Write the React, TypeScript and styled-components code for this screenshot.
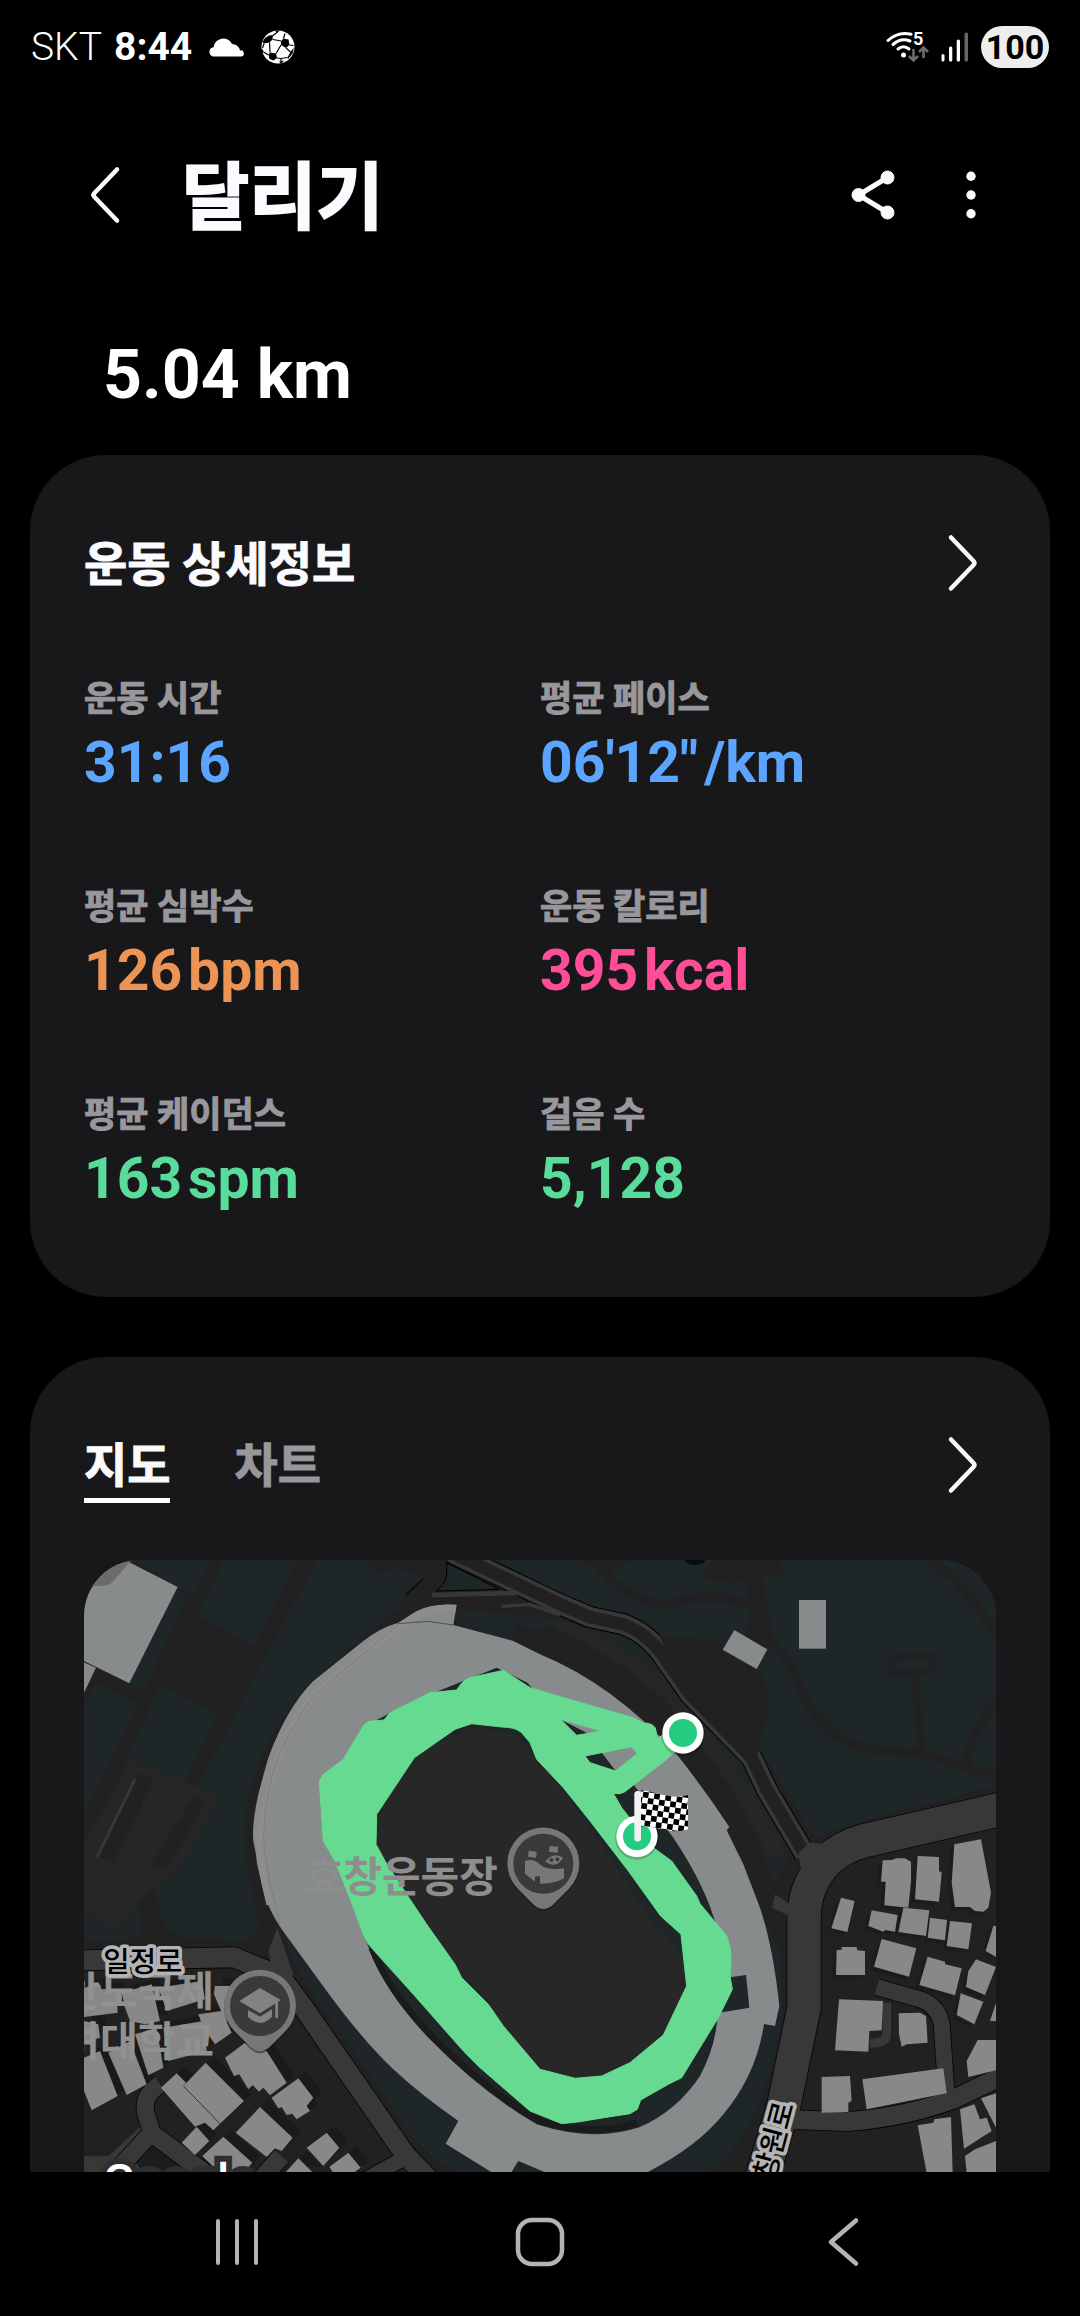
import React from "react";
import styled, { createGlobalStyle } from "styled-components";

const GlobalStyle = createGlobalStyle`
  * { box-sizing: border-box; }
  body { margin: 0; background: #000; }
`;

const Screen = styled.div`
  height: 100vh;
  display: flex;
  flex-direction: column;
  background: #000;
  color: #fafaff;
  font-family: Roboto, "Noto Sans CJK KR", sans-serif;
`;

const StatusBar = styled.div`
  flex: none;
  height: 94px;
  padding: 0 31px;
  display: flex;
  align-items: center;
  justify-content: space-between;
  color: #fff;
`;

const StatusGroup = styled.div<{ $gap: number }>`
  display: flex;
  align-items: center;
  gap: ${(p) => p.$gap}px;
  svg { display: block; }
`;

const Carrier = styled.span`
  font-size: 39px;
  font-weight: 300;
`;

const Clock = styled.span`
  font-size: 39px;
  font-weight: 700;
  line-height: 42px;
`;

const Battery = styled.span`
  height: 42px;
  width: 68px;
  border-radius: 21px;
  background: #ededed;
  color: #000;
  font-size: 34px;
  line-height: 42px;
  font-weight: 700;
  text-align: center;
`;

const Header = styled.header`
  flex: none;
  height: 202px;
  padding: 0 81px 0 76px;
  display: flex;
  align-items: center;
  gap: 42px;
`;

const Title = styled.h1`
  margin: 0;
  padding: 5px 0 0 8px;
  flex: 1;
  font-size: 73px;
  line-height: 96px;
  font-weight: 700;
  -webkit-text-stroke: 2px currentColor;
`;

const IconButton = styled.button`
  flex: none;
  border: 0;
  padding: 0;
  background: none;
  color: inherit;
  display: flex;
  align-items: center;
  justify-content: center;
  cursor: pointer;
`;

const Content = styled.main`
  flex: 1;
  min-height: 0;
  overflow: hidden;
  padding: 0 30px;
  display: flex;
  flex-direction: column;
`;

const Distance = styled.p`
  flex: none;
  margin: 0;
  padding-left: 73px;
  font-size: 68px;
  line-height: 159px;
  font-weight: 700;
  color: #fff;
`;

const Card = styled.section`
  flex: none;
  padding: 54px 54px 83px;
  border-radius: 76px;
  background: #18181a;
  & + & { margin-top: 60px; }
`;

const CardHead = styled.div`
  height: 108px;
  display: flex;
  align-items: center;
  justify-content: space-between;
`;

const CardTitle = styled.h2`
  margin: 0;
  padding-top: 3px;
  font-size: 47px;
  line-height: 64px;
  font-weight: 700;
  -webkit-text-stroke: 1px currentColor;
`;

const Stats = styled.dl`
  margin: 55px 0 0;
  display: grid;
  grid-template-columns: 1fr 1fr;
  row-gap: 82px;
`;

const StatLabel = styled.dt`
  font-size: 35px;
  line-height: 56px;
  font-weight: 700;
  color: #98979c;
  -webkit-text-stroke: 1px currentColor;
`;

const StatValue = styled.dd<{ $color: string }>`
  margin: 0;
  display: flex;
  gap: 6px;
  font-size: 57px;
  line-height: 70px;
  font-weight: 700;
  color: ${(p) => p.$color};
`;

const Tabs = styled.div`
  display: flex;
  gap: 64px;
`;

const Tab = styled.button<{ $active?: boolean }>`
  border: 0;
  border-bottom: 5px solid ${(p) => (p.$active ? "#fff" : "transparent")};
  padding: 7px 0 0;
  background: none;
  font-family: inherit;
  font-size: 47px;
  line-height: 64px;
  font-weight: 700;
  color: ${(p) => (p.$active ? "#fafafa" : "#98979c")};
  -webkit-text-stroke: 1px currentColor;
  cursor: pointer;
`;

const MapFrame = styled.div`
  margin-top: 41px;
  border-radius: 56px;
  overflow: hidden;
  svg { display: block; width: 100%; height: auto; }
`;

const NavBar = styled.nav`
  flex: none;
  height: 144px;
  padding: 0 86px 4px;
  display: grid;
  grid-template-columns: repeat(3, 1fr);
  color: #b4b4b4;
`;

const stats = [
  { label: "운동 시간", value: "31:16", unit: "", color: "#5ba5ff" },
  { label: "평균 페이스", value: "06'12\"", unit: "/km", color: "#5ba5ff" },
  { label: "평균 심박수", value: "126", unit: "bpm", color: "#eb9456" },
  { label: "운동 칼로리", value: "395", unit: "kcal", color: "#ff4e97" },
  { label: "평균 케이던스", value: "163", unit: "spm", color: "#59dc9b" },
  { label: "걸음 수", value: "5,128", unit: "", color: "#59dc9b" },
];

const Chevron = () => (
  <svg width="56" height="60" viewBox="0 0 56 60" fill="none" stroke="#fafafa" strokeWidth="4.500" strokeLinecap="round" strokeLinejoin="round" aria-hidden="true">
    <path d="M11 4.500 L33.500 28 Q35.500 30 33.500 32 L11 55.500" />
  </svg>
);

const CloudIcon = () => (
  <svg width="37" height="22" viewBox="0 0 37 22" fill="#fff" aria-hidden="true">
    <path d="M5 20.500 A4.800 4.800 0 0 1 5 11.200 H5.600 A9.700 9.700 0 0 1 24 8 A8 8 0 0 1 32 14.500 A3 3 0 0 1 33.500 20.500 Z" />
  </svg>
);

const BallIcon = () => (
  <svg width="34" height="34" viewBox="0 0 34 34" aria-hidden="true">
    <circle cx="17" cy="17" r="16.500" fill="#fff" />
    <g fill="#000">
      <path d="M8 5.500 L12 5 L11.500 9.500 L8.500 12.500 L3 13.500 L1.500 12 L4 8 Z" />
      <path d="M13 0.500 L19 0.500 L16.500 2.500 Z" />
      <path d="M22.500 8.500 L27.500 9.500 L28.500 15 L25 18 L20 15 L20 11 Z" />
      <path d="M9 22.500 L15 23.500 L16 28 L12.500 30.500 L8.500 29 L7.500 25 Z" />
      <path d="M29.500 22 L33 17.500 L31.500 23.500 L27 29 L26.500 27.500 Z" />
      <path d="M0.500 18 L2.500 21 L2 24 L0.500 21 Z" />
      <path d="M18 31.500 L23 30.500 L20 33.800 Z" />
    </g>
    <g stroke="#000" strokeWidth="1.200" fill="none">
      <path d="M12 5.500 L16.500 2 M12 9.500 L20 11 M8.500 12.500 L9 22.500 M3 13.500 L1.500 18 M22.500 8.500 L24 3.500 M28.500 15 L32.500 15.500 M20 15 L15 23.500 M25 18 L29.500 22 M16 28 L20 28.500 L26.500 27.500 M7.500 25 L2.500 22 M20 28.500 V31" />
    </g>
  </svg>
);

const WifiIcon = () => (
  <svg width="43" height="32" viewBox="0 0 43 32" aria-label="Wi-Fi 5">
    <g fill="none" stroke="#fff" strokeWidth="3" strokeLinecap="round">
      <path d="M2 9.500 Q12 0 25 3.200" />
      <path d="M7 13.500 Q15 6.500 24 10" />
      <path d="M12 18 Q17.500 13.500 23 18" />
    </g>
    <circle cx="17.500" cy="24" r="2.500" fill="#fff" />
    <text x="27" y="13.500" fontSize="18" fontWeight="700" fill="#fff">5</text>
    <g fill="none" stroke="#6c6c6c" strokeWidth="2.600">
      <path d="M27.500 18 V29 M23 25 L27.500 29.500 L32 25" />
      <path d="M37.500 27 V17 M33 21 L37.500 16.500 L42 21" />
    </g>
  </svg>
);

const SignalIcon = () => (
  <svg width="28" height="30" viewBox="0 0 28 30" aria-label="신호">
    <g fill="#fff">
      <rect x="0.500" y="22" width="3" height="7.500" rx="1.500" />
      <rect x="8" y="14.500" width="3.300" height="15" rx="1.500" />
      <rect x="15.700" y="7.500" width="3.300" height="22" rx="1.500" />
    </g>
    <rect x="23.500" y="0.500" width="3.500" height="29" rx="1.500" fill="#666" />
  </svg>
);

const westBlocks = [
  "12,380 60,370 65,385 110,385 113,455 12,468",
  "125,395 215,370 240,480 195,490 150,480 135,440",
  "235,380 365,360 375,415 260,450",
  "355,460 425,450 455,515 405,550 370,500",
  "405,375 450,375 440,490 402,400",
  "12,480 55,490 60,530 12,545",
  "12,590 60,570 113,705 35,748 12,690",
  "85,575 150,540 200,670 140,702",
  "165,520 230,500 250,620 205,643",
  "250,500 370,480 380,570 265,600",
  "435,590 495,545 560,570 620,665 570,703 550,680 537,692 518,672 505,685 478,640 462,645",
  "575,710 655,652 700,710 680,735 690,750 650,775 637,758 620,762 605,738 595,742",
  "467,815 540,738 638,830 605,870 585,862 560,888",
  "310,675 377,605 492,720 420,788",
  "243,680 290,637 318,665 310,675 420,788 400,808 375,785 345,797",
  "305,845 350,797 388,840 345,882",
  "367,885 430,827 517,905 490,936 420,936",
  "680,860 740,815 778,860 730,915",
  "748,918 805,875 842,920 820,936 760,936",
  "615,936 655,892 700,936",
];

const eastBlocks = [
  "903,110 944,120 922,213 874,202",
  "1028,-2 1055,-3 1070,-8 1095,-8 1113,2 1113,60 1105,140 1033,133 1037,62 1023,62",
  "1133,-15 1197,-12 1197,30 1205,35 1197,122 1125,115",
  "1243,-50 1323,-65 1353,95 1345,140 1330,152 1305,150 1290,138 1245,138 1235,65",
  "995,148 1073,162 1065,212 1035,207 1030,212 985,195",
  "1090,140 1168,148 1158,225 1075,213",
  "1170,170 1221,177 1215,238 1163,230",
  "1230,180 1296,187 1285,265 1220,255",
  "1360,195 1368,195 1368,288 1337,270",
  "890,268 905,266 905,258 950,258 952,268 975,270 975,342 888,342",
  "1025,234 1129,262 1107,347 1002,317",
  "1163,287 1215,302 1215,310 1265,322 1245,403 1138,372",
  "1308,295 1368,318 1335,402 1278,378 1285,330",
  "1262,397 1330,422 1303,490 1250,462",
  "1368,425 1350,480 1368,480",
  "897,415 1029,420 1025,508 988,510 985,572 885,568",
  "1076,457 1140,455 1158,465 1163,545 1100,550 1085,557 1077,520",
  "1313,537 1368,537 1368,628 1285,648 1280,600",
  "845,648 930,645 935,720 925,725 925,753 845,755",
  "967,655 1210,622 1220,697 980,745",
  "1133,793 1180,785 1183,775 1233,768 1238,936 1160,936",
  "1260,745 1303,730 1320,775 1340,770 1355,810 1272,863",
  "1323,712 1368,697 1368,800",
  "1275,885 1305,865 1368,840 1368,936 1280,936",
];

const roads: { d: string; w: number }[] = [
  { d: "M0 1228 L462 1219 L600 1275 L672 1372 L975 1810 L1080 1920", w: 60 },
  { d: "M240 1600 Q175 1640 205 1710 L215 1745 L90 1880", w: 52 },
  { d: "M200 1735 L420 1900", w: 54 },
  { d: "M520 1910 L605 1815", w: 54 },
  { d: "M830 1900 L985 1815", w: 44 },
  { d: "M2120 1705 L2300 1712 Q2470 1700 2620 1645 L2760 1578", w: 56 },
  { d: "M2390 1308 L2520 1345 Q2575 1365 2585 1420 L2600 1640", w: 48 },
  { d: "M2770 773 L2350 870 Q2225 905 2185 1020 Q2172 1060 2172 1110 L2172 1370 L2112 1660 L2040 1900", w: 100 },
];

const PARK = "#1e2627";
const GROUND = "#212121";
const ROAD = "#383838";
const BLOCK = "#888888";
const STAND = "#878b8b";

const Pin = ({ x, y, children }: { x: number; y: number; children: React.ReactNode }) => (
  <g transform={`translate(${x} ${y})`}>
    <path d="M-76 76 A108 108 0 1 1 76 76 L28 124 Q0 148 -28 124 Z" fill="#141414" opacity="0.500" transform="translate(0 6)" />
    <path d="M-76 76 A108 108 0 1 1 76 76 L28 124 Q0 148 -28 124 Z" fill="#777" />
    <circle r="90" fill="#3a3a3a" />
    {children}
  </g>
);

const RouteMap = () => (
  <svg viewBox="12 27 2736 2400" role="img" aria-label="달리기 경로 지도">
    <defs>
      <pattern id="checker" width="34" height="34" patternUnits="userSpaceOnUse" patternTransform="translate(1690 722) rotate(8)">
        <rect width="34" height="34" fill="#fff" />
        <rect width="17" height="17" fill="#000" />
        <rect x="17" y="17" width="17" height="17" fill="#000" />
      </pattern>
    </defs>
    <rect x="0" y="0" width="2800" height="2500" fill={GROUND} />

    {/* parkland */}
    <g fill={PARK}>
      <polygon points="150,27 395,27 340,140 293,108" />
      <polygon points="430,27 650,27 525,285 350,195" />
      <polygon points="293,112 322,132 190,425 150,395" />
      <path d="M710 27 H850 L905 70 L940 45 L1030 78 L975 130 L960 170 L700 385 Q600 490 530 650 Q480 800 495 900 L535 1120 Q535 1170 480 1170 L300 1160 Q228 1120 228 1010 Q235 930 300 900 L410 740 L350 710 Z" />
      <polygon points="45,395 175,458 12,790 12,460" />
      <polygon points="240,405 418,490 300,720 130,635" />
      <path d="M12 1080 L110 1140 L175 1050 L187 1130 Q180 1170 100 1170 H12 Z" />
      <path d="M1200 27 H2748 V705 L2350 810 L2205 860 L2035 590 L1740 255 L1680 205 L1530 170 L1380 115 Z" />
      <path d="M1125 175 L1380 195 L1510 230 Q1630 250 1700 290 L1800 440 L2000 630 L2140 890 L2085 1000 L2060 940 Q2000 720 1800 520 Q1600 320 1420 220 L1300 270 L1130 220 Z" />
      <path d="M600 1110 L640 1240 L1000 1760 Q1060 1830 1140 1866 H1880 Q2010 1780 2070 1560 L2110 1400 L2100 1200 L1950 900 L1500 400 L700 700 Z" />
    </g>
    <ellipse cx="1845" cy="27" rx="30" ry="15" fill="#060c16" />

    {/* car parks and terraces */}
    <g fill="#262626">
      <path d="M150 630 L400 725 Q415 740 405 760 L290 960 L175 1050 L110 1140 L12 1080 V880 Z" />
      <path d="M1440 205 Q1700 290 1900 560 Q2020 720 2110 890 Q2110 920 2070 925 Q1930 640 1760 450 Q1600 300 1420 230 Z" />
    </g>
    <polygon points="180,665 222,685 100,935 60,920" fill={GROUND} />
    <polygon points="340,735 375,755 260,960 215,940" fill={GROUND} />
    <path d="M165 685 L50 920" stroke={ROAD} strokeWidth="8" />
    <path d="M1300 250 Q1620 320 1790 540 Q1930 720 2000 930" stroke={GROUND} strokeWidth="60" fill="none" />

    {/* park footpaths */}
    <g fill="none" stroke={GROUND} strokeWidth="26">
      <path d="M1540 27 Q1640 160 1770 158 Q1900 115 2010 165" />
      <path d="M2070 270 Q2130 320 2160 410 Q2230 570 2370 595 L2540 610 L2680 658 L2760 672" />
      <path d="M2660 640 Q2660 560 2760 440" />
      <path d="M2540 15 Q2640 90 2700 180 L2760 260" />
      <path d="M2430 322 L2553 310 L2558 358 L2436 370 Z" strokeWidth="18" />
      <path d="M2503 370 L2525 600" strokeWidth="20" />
    </g>
    <g fill={GROUND}>
      <path d="M1490 27 H1660 L1590 62 L1540 50 Z" />
      <path d="M1870 60 L1900 27 H2103 L2108 70 L1960 95 L1880 88 Z" />
      <path d="M1995 85 L2050 85 L2078 270 L2050 320 L1995 250 L2010 200 Z" />
      <path d="M850 27 H1100 V70 L1070 125 L1130 160 L1000 190 L960 170 L1030 78 L940 45 L905 70 Z" />
    </g>

    {/* upper lane */}
    <g fill="none" strokeLinejoin="round">
      <path d="M1115 5 L1440 160 L1530 198 L1630 220 Q1710 250 1760 330 L1830 430 L2015 620 L2060 715 L2175 910" stroke="#000" strokeWidth="66" />
      <path d="M1115 5 L1440 160 L1530 198 L1630 220 Q1710 250 1760 330 L1830 430 L2015 620 L2060 715 L2175 910" stroke={ROAD} strokeWidth="60" />
      <path d="M1115 5 L1440 160 L1530 198 L1630 220 Q1710 250 1760 330 L1830 430 L2015 620 L2060 715 L2175 910" stroke={GROUND} strokeWidth="38" />
      <path d="M1100 35 V75 Q1095 100 1068 120 L1258 115 Z" fill={PARK} stroke="#000" strokeWidth="3" />
      <path d="M1055 132 L1312 126" stroke={ROAD} strokeWidth="14" />
      <path d="M1265 166 L1350 160 L1440 192" stroke={ROAD} strokeWidth="10" />
      <path d="M978 132 L1030 82" stroke="#0b0b0b" strokeWidth="4" />
    </g>
    <path d="M1740 256 L1880 265 Q2010 300 2045 370 Q2080 460 2045 560 L2030 620 L2000 605 L1840 440 L1770 330 Z" fill={GROUND} />
    <g fill={STAND}>
      <rect x="2157" y="147" width="81" height="146" />
      <polygon points="1963,237 2062,295 2030,354 1928,296" />
    </g>

    {/* streets */}
    <polygon points="12,1816 85,1816 180,1728 400,1866 12,1866" fill={ROAD} />
    <polygon points="150,1810 215,1768 345,1866 190,1866" fill="#1c1c1c" />
    {roads.map((r) => (
      <path key={`e${r.d}`} d={r.d} stroke="#050505" strokeWidth={r.w + 5} fill="none" />
    ))}
    {roads.map((r) => (
      <path key={r.d} d={r.d} stroke={ROAD} strokeWidth={r.w} fill="none" />
    ))}
    <path d="M2420 1355 V1450 Q2420 1478 2370 1476" stroke={ROAD} strokeWidth="26" fill="none" />
    <polygon points="2155,905 2190,875 2250,880 2200,960 2165,970" fill={ROAD} />
    <polygon points="2085,1030 2130,1060 2130,1095 2076,1070" fill={ROAD} />
    <polygon points="565,1200 592,1130 640,1270 620,1300 572,1232" fill={ROAD} />

    {/* buildings */}
    <g fill="#888b8b">
      <polygon points="12,27 135,27 293,108 148,397 12,330" />
      <polygon points="12,334 48,350 12,425" />
    </g>
    <path d="M20 27 H155 L95 95 Q80 108 40 104 L12 100 Z" fill="#6b6b6b" />
    <g transform="translate(0 930)">
      <g fill="#1a1a1a" transform="translate(24 -20)">
        {westBlocks.map((p) => <polygon key={p} points={p} />)}
      </g>
      <g fill={BLOCK}>
        {westBlocks.map((p) => <polygon key={p} points={p} />)}
      </g>
      <path d="M310 675 L420 788" stroke="#222" strokeWidth="2" />
    </g>
    <g transform="translate(1380 930)">
      <g fill="#1c1c1c" transform="translate(-12 10)">
        {eastBlocks.slice(0, 14).map((p) => <polygon key={p} points={p} />)}
      </g>
      <g fill={BLOCK}>
        {eastBlocks.map((p) => <polygon key={p} points={p} />)}
      </g>
    </g>

    {/* stadium */}
    <path
      d="M1130 162 Q1060 155 1010 180 L955 215 Q900 230 850 270 L700 390 Q620 470 565 620 Q545 690 535 730 Q515 820 520 870 L545 1000 Q560 1070 605 1135 L740 1320 Q850 1470 940 1555 Q1020 1630 1135 1710 L1097 1778 L1245 1870 H1290 L1315 1830 L1410 1870 H1690 Q1850 1790 1930 1690 Q2030 1570 2052 1419 L2085 1425 L2098 1365 Q2080 1190 2040 1070 L1990 940 L1940 838 L1948 828 Q1870 710 1790 610 Q1600 400 1380 310 L1300 270 L1120 222 Z"
      fill={STAND}
    />
    <g fill="none">
      <path d="M1128 172 Q1050 168 1000 200 L870 290 L710 425 Q630 510 590 640 Q560 740 541 830 V930 L570 1060" stroke="#8e8c8c" strokeWidth="22" />
      <path d="M955 220 L700 435 Q610 560 580 660 Q545 800 552 890 L568 990 L600 1120" stroke="#777" strokeWidth="2" />
      <path d="M955 218 L1045 211 L1120 222" stroke="#333" strokeWidth="2" />
    </g>
    <path
      d="M1250 350 L1342 395 L1440 505 L1520 545 L1607 660 L1660 700 L1780 860 Q1880 1010 1910 1130 L1940 1280 L1998 1272 L2008 1370 L1913 1386 Q1910 1480 1860 1575 Q1790 1680 1680 1728 Q1540 1775 1370 1720 Q1200 1620 1050 1465 Q920 1330 862 1180 L780 960 L750 700 L820 580 L890 507 L1000 450 Z"
      fill={PARK}
    />
    <path d="M875 1190 Q930 1330 1070 1470 Q1220 1620 1380 1710 Q1540 1760 1670 1715" stroke="#1b1b1b" strokeWidth="20" fill="none" />
    <path d="M1175 530 L1290 545 Q1370 600 1430 690 L1530 830 L1720 1120 Q1820 1200 1825 1305 L1750 1470 L1650 1550 L1480 1600 L1380 1570 L1100 1250 L880 900 L880 780 L1010 610 Z" fill="#272727" />

    {/* recorded route */}
    <path
      fillRule="evenodd"
      fill="#66da91"
      stroke="#66da91"
      strokeWidth="3"
      strokeLinejoin="round"
      d="M718 690 L730 670 L790 625 L850 525 Q860 510 878 510 L912 507 L930 485 L1050 425 L1130 417 Q1150 385 1170 380 L1270 358 L1350 410 L1440 437 L1660 500 L1690 516 Q1725 515 1728 540 L1732 562 L1760 545 L1830 560 L1760 625 L1635 722 Q1620 732 1600 727 L1625 770 L1720 890 L1775 930 L1850 1035 L1860 1058 L1940 1155 Q1955 1190 1953 1230 L1950 1275 L1957 1315 L1915 1400 L1805 1580 L1765 1600 L1682 1647 L1672 1675 L1650 1688 L1560 1702 L1500 1712 L1445 1718 L1350 1680 L1200 1550 L1150 1500 L1000 1330 L865 1180 L850 1150 L815 1055 L765 930 L730 870 Z
         M1175 518 L1125 535 L1003 620 L890 790 L888 880 L915 930 L980 1030 L1040 1120 L1125 1240 L1145 1280 L1225 1360 L1270 1425 L1380 1555 L1485 1582 L1565 1575 L1650 1535 L1750 1452 L1820 1305 L1803 1150 L1742 1095 L1645 960 L1530 810 L1450 710 L1370 625 L1350 575 L1325 545 Q1305 528 1265 528 Z
         M1442 505 L1565 540 L1490 553 Z
         M1515 615 L1655 587 L1672 608 L1607 660 L1530 635 Z"
    />

    {/* place pins */}
    <Pin x={1390} y={938}>
      <g fill="#777">
        <path d="M-55 -8 Q-30 -18 -8 4 Q10 20 62 14 V44 Q30 62 -10 60 V38 H-25 V54 L-55 30 Z" />
        <rect x="-45" y="-37" width="24" height="18" transform="rotate(8 -33 -27)" />
        <rect x="18" y="-52" width="26" height="18" transform="rotate(6 30 -42)" />
        <path d="M2 -6 Q30 -42 62 -18 Q40 22 2 -6 Z" stroke="#3a3a3a" strokeWidth="5" />
      </g>
      <g fill="#3a3a3a">
        <circle cx="24" cy="-11" r="6" />
        <circle cx="42" cy="-13" r="6" />
      </g>
    </Pin>
    <Pin x={540} y={1365}>
      <g fill="#828282">
        <path d="M-62 -15 L0 -54 L62 -18 L0 22 Z" />
        <path d="M-36 12 L0 32 L36 10 V32 Q20 50 0 50 Q-20 50 -36 32 Z" />
        <path d="M46 -10 L54 -14 V36 H46 Z" />
      </g>
    </Pin>
    <g fontFamily="'Noto Sans CJK KR', sans-serif" fontWeight="700">
      <text x="674" y="1022" fontSize="126" fill="#8e8e8e">효창운동장</text>
      <g fontSize="124" fill="#919191" textAnchor="end">
        <text x="402" y="1365">안도국제</text>
        <text x="402" y="1515">려대학교</text>
      </g>
      <g fontSize="86" fontWeight="500" fill="#000" stroke="#b4b4b4" strokeWidth="22" strokeLinejoin="round" paintOrder="stroke">
        <text x="70" y="1262">일정로</text>
        <text textAnchor="end" transform="translate(2142 1662) rotate(-75)">창원로</text>
      </g>
    </g>
    <text x="68" y="1942" fontSize="144" fontWeight="500" fill="#fff" stroke="#2f2f2f" strokeWidth="36" paintOrder="stroke">Google</text>

    {/* start and finish */}
    {[[1809, 546], [1671, 856]].map(([cx, cy]) => (
      <g key={cx}>
        <circle cx={cx} cy={cy + 4} r="66" fill="#000" opacity="0.180" />
        <circle cx={cx} cy={cy} r="62" fill="#fff" />
        <circle cx={cx} cy={cy} r="42" fill="#24cb80" />
      </g>
    ))}
    <path d="M1683 718 C1730 722 1775 748 1824 732 V835 C1775 852 1735 825 1683 826 Z" fill="url(#checker)" />
    <path d="M1673 730 V862" stroke="#f2f2f2" strokeWidth="20" strokeLinecap="round" />
  </svg>
);

export default function App() {
  return (
    <Screen>
      <GlobalStyle />
      <StatusBar>
        <StatusGroup $gap={16}>
          <StatusGroup $gap={12}>
            <Carrier>SKT</Carrier>
            <Clock>8:44</Clock>
          </StatusGroup>
          <CloudIcon />
          <BallIcon />
        </StatusGroup>
        <StatusGroup $gap={12}>
          <WifiIcon />
          <SignalIcon />
          <Battery>100</Battery>
        </StatusGroup>
      </StatusBar>

      <Header>
        <IconButton aria-label="뒤로">
          <svg width="56" height="60" viewBox="0 0 56 60" fill="none" stroke="#fafaff" strokeWidth="4.500" strokeLinecap="round" strokeLinejoin="round">
            <path d="M41 4.500 L18.500 28 Q16.500 30 18.500 32 L41 55.500" />
          </svg>
        </IconButton>
        <Title>달리기</Title>
        <IconButton aria-label="공유">
          <svg width="56" height="60" viewBox="0 0 56 60" fill="#fafaff" stroke="#fafaff">
            <path d="M42.500 12.500 L13.500 30 L42.500 47.500" fill="none" strokeWidth="5" />
            <circle cx="42.500" cy="12.500" r="6.500" />
            <circle cx="13.500" cy="30" r="6.500" />
            <circle cx="42.500" cy="47.500" r="6.500" />
          </svg>
        </IconButton>
        <IconButton aria-label="더보기">
          <svg width="56" height="60" viewBox="0 0 56 60" fill="#fafaff">
            <circle cx="28" cy="11.300" r="4.700" />
            <circle cx="28" cy="30" r="4.700" />
            <circle cx="28" cy="48.700" r="4.700" />
          </svg>
        </IconButton>
      </Header>

      <Content>
        <Distance>5.04 km</Distance>

        <Card>
          <CardHead>
            <CardTitle>운동 상세정보</CardTitle>
            <IconButton aria-label="운동 상세정보 열기">
              <Chevron />
            </IconButton>
          </CardHead>
          <Stats>
            {stats.map((s) => (
              <div key={s.label}>
                <StatLabel>{s.label}</StatLabel>
                <StatValue $color={s.color}>
                  <span>{s.value}</span>
                  {s.unit && <span>{s.unit}</span>}
                </StatValue>
              </div>
            ))}
          </Stats>
        </Card>

        <Card>
          <CardHead>
            <Tabs role="tablist">
              <Tab role="tab" aria-selected="true" $active>지도</Tab>
              <Tab role="tab" aria-selected="false">차트</Tab>
            </Tabs>
            <IconButton aria-label="지도 열기">
              <Chevron />
            </IconButton>
          </CardHead>
          <MapFrame>
            <RouteMap />
          </MapFrame>
        </Card>
      </Content>

      <NavBar>
        <IconButton aria-label="최근 앱">
          <svg width="50" height="50" viewBox="0 0 50 50" stroke="currentColor" strokeWidth="4" strokeLinecap="round">
            <path d="M6 4 V46 M25 4 V46 M44 4 V46" />
          </svg>
        </IconButton>
        <IconButton aria-label="홈">
          <svg width="50" height="50" viewBox="0 0 50 50" fill="none" stroke="currentColor" strokeWidth="4.500">
            <rect x="3" y="3" width="44" height="44" rx="14" />
          </svg>
        </IconButton>
        <IconButton aria-label="뒤로 가기">
          <svg width="50" height="50" viewBox="0 0 50 50" fill="none" stroke="currentColor" strokeWidth="4.500" strokeLinecap="round" strokeLinejoin="round">
            <path d="M38 3.500 L13 25 L38 46.500" />
          </svg>
        </IconButton>
      </NavBar>
    </Screen>
  );
}
